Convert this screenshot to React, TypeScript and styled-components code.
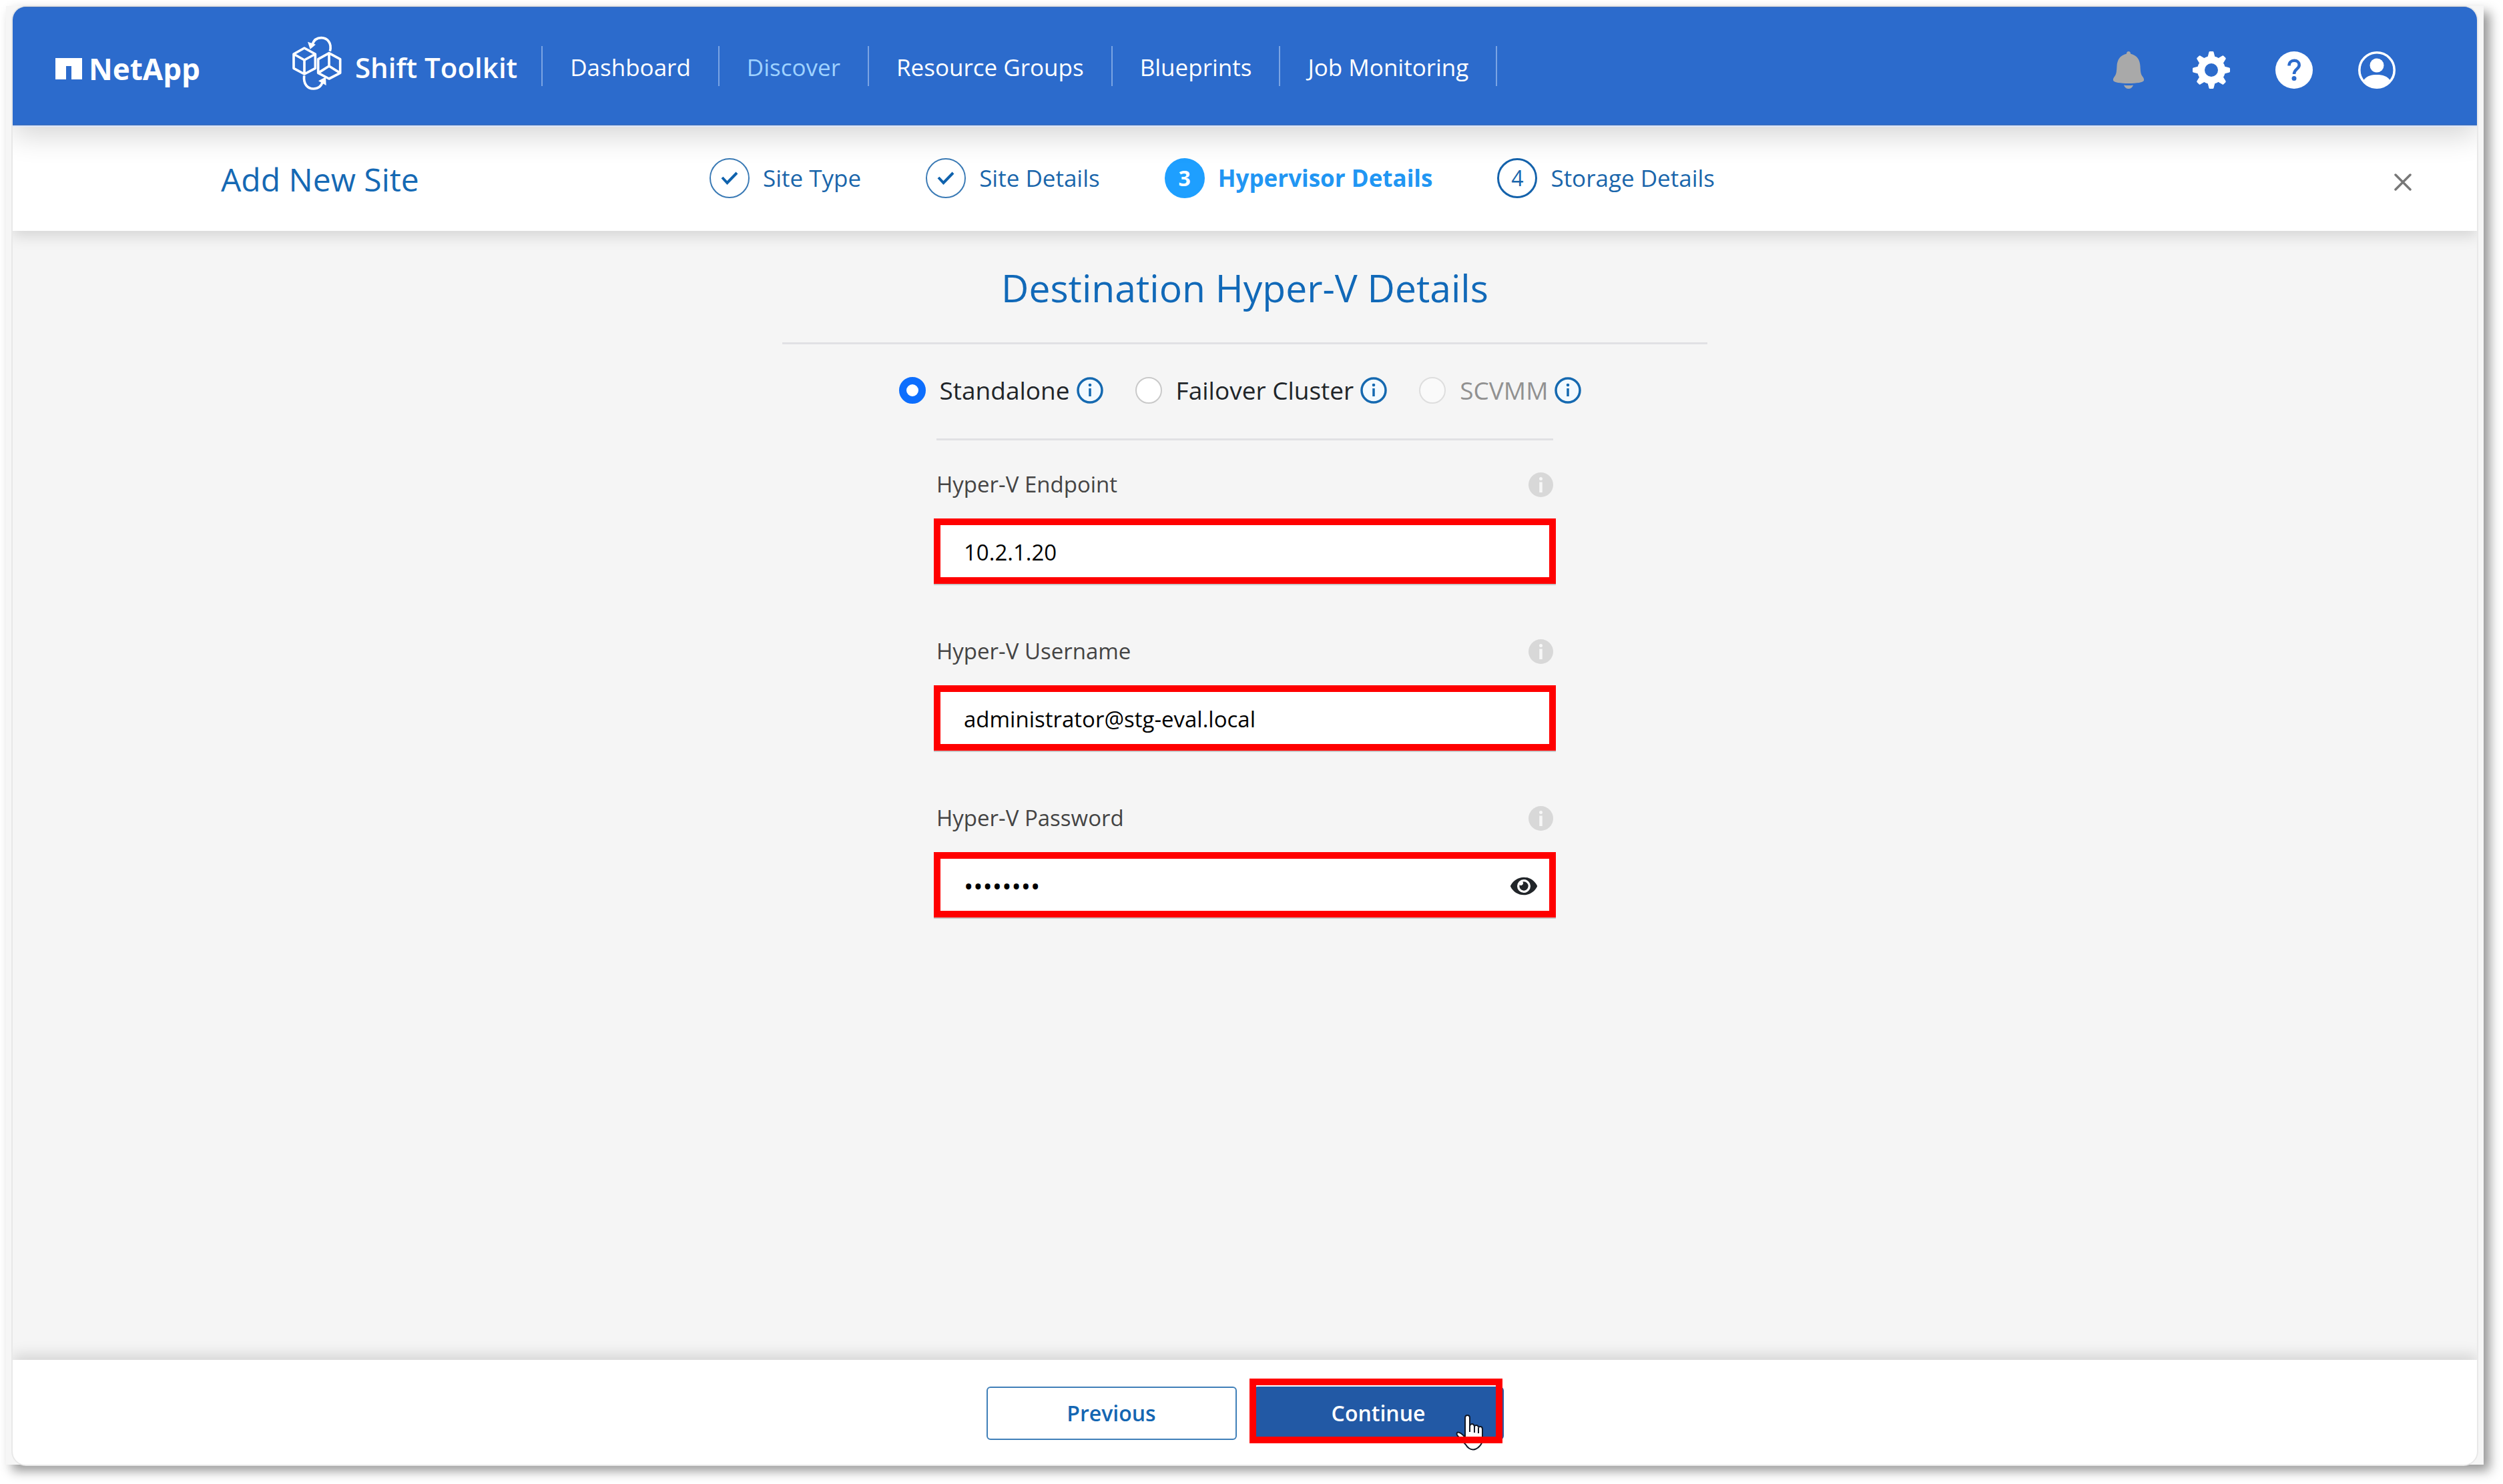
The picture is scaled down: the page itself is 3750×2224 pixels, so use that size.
import React, { useState } from "react";
import styled, { createGlobalStyle, css } from "styled-components";
import { FaEye } from "react-icons/fa";

const GlobalStyle = createGlobalStyle`
  *, *::before, *::after { box-sizing: border-box; }
  body { margin: 0; background: #fff; font-family: "Open Sans", "Noto Sans", sans-serif; }
  button, input { font-family: inherit; }
`;

const Page = styled.div`
  min-height: 100vh;
  display: flex;
  padding: 9px 29px 29px 9px;
`;

const Frame = styled.div`
  flex: 1;
  display: flex;
  padding: 1px 10px 0;
  background: #f6f6f6;
  box-shadow: 9px 9px 16px rgba(0, 0, 0, 0.42);
`;

const Window = styled.div`
  flex: 1;
  display: flex;
  flex-direction: column;
  overflow: hidden;
  border-radius: 20px;
  background: #f5f5f5;
  box-shadow: 0 0 0 2px #e8e8e8;
`;

const Header = styled.header`
  position: relative;
  z-index: 2;
  display: flex;
  align-items: center;
  min-height: 178px;
  padding: 0 122px 0 64px;
  background: #2c6bcc;
  border-top: 1px solid #4470b4;
  border-bottom: 1px solid #4470b4;
  box-shadow: 0 2px 0 #dce7fb, 0 16px 40px rgba(0, 0, 0, 0.16);
  color: #fff;
`;

const Brand = styled.a`
  display: flex;
  align-items: center;
  gap: 10px;
  padding-top: 8px;
  color: inherit;
  text-decoration: none;
  font-size: 44px;
  line-height: 60px;
  font-weight: 700;
`;

const Product = styled.div`
  display: flex;
  align-items: center;
  gap: 20px;
  margin: 0 36px 0 137px;
  padding-top: 4px;
  font-size: 42px;
  line-height: 60px;
  font-weight: 600;
`;

const ProductMark = styled.svg`
  width: 75px;
  height: 82px;
  margin-bottom: 12px;
`;

const Nav = styled.nav`
  display: flex;
  border-left: 2px solid #7ba4e3;
`;

const NavLink = styled.a<{ $active?: boolean }>`
  padding: 4px 41px 0;
  border-right: 2px solid #7ba4e3;
  color: ${(p) => (p.$active ? "#9fd2ff" : "#fff")};
  font-size: 35px;
  line-height: 56px;
  text-decoration: none;
  white-space: nowrap;
`;

const Actions = styled.div`
  display: flex;
  gap: 68px;
  margin-left: auto;
  padding-top: 12px;
`;

const IconButton = styled.button`
  display: flex;
  padding: 0;
  border: 0;
  background: none;
  cursor: pointer;
`;

const ActionIcon = styled.svg`
  width: 56px;
  height: 56px;
`;

const StepBar = styled.div`
  position: relative;
  z-index: 1;
  display: grid;
  grid-template-columns: 1fr auto 1fr;
  align-items: center;
  min-height: 158px;
  padding-right: 98px;
  background: #fff;
  box-shadow: 0 8px 20px rgba(0, 0, 0, 0.13);
`;

const WizardTitle = styled.h1`
  margin: 0;
  padding: 4px 0 0 312px;
  color: #1569b4;
  font-size: 48px;
  line-height: 64px;
  font-weight: 400;
`;

const Steps = styled.ol`
  display: flex;
  gap: 97px;
  margin: 0;
  padding: 0;
  list-style: none;
`;

const Step = styled.li<{ $current?: boolean }>`
  display: flex;
  align-items: center;
  gap: 20px;
  color: ${(p) => (p.$current ? "#2196f3" : "#1a66ab")};
  font-size: 35px;
  line-height: 60px;
  font-weight: ${(p) => (p.$current ? 700 : 400)};
  white-space: nowrap;
`;

type StepState = "done" | "current" | "next";

const StepBadge = styled.span<{ $state: StepState }>`
  display: flex;
  align-items: center;
  justify-content: center;
  width: 60px;
  height: 60px;
  border: ${(p) => (p.$state === "done" ? "2px solid #3a7ab5" : "3px solid #1462ab")};
  border-radius: 50%;
  font-size: 32px;
  line-height: 54px;
  ${(p) =>
    p.$state === "current" &&
    css`
      border-color: #1e9fff;
      background: #1e9fff;
      color: #fff;
    `}
`;

const CloseButton = styled(IconButton)`
  justify-self: end;
  padding-top: 12px;
`;

const Main = styled.main`
  flex: 1;
  display: flex;
  flex-direction: column;
  align-items: center;
  padding: 47px 24px;
`;

const Title = styled.h2`
  margin: 0;
  color: #1169b8;
  font-size: 57px;
  line-height: 76px;
  font-weight: 400;
`;

const Rule = styled.hr<{ $wide?: boolean }>`
  width: 100%;
  max-width: ${(p) => (p.$wide ? 1386 : 924)}px;
  height: 3px;
  margin: 44px 0 41px;
  border: 0;
  background: #e1e1e4;
`;

const RadioRow = styled.div`
  display: flex;
  gap: 48px;
  padding-right: 14px;
`;

const RadioOption = styled.div<{ $disabled?: boolean }>`
  display: flex;
  align-items: center;
  gap: 10px;
  color: ${(p) => (p.$disabled ? "#919191" : "#212529")};
`;

const RadioLabel = styled.label`
  display: flex;
  align-items: center;
  gap: 21px;
  font-size: 37px;
  line-height: 56px;
  white-space: nowrap;
`;

const Radio = styled.input`
  appearance: none;
  width: 40px;
  height: 40px;
  margin: 0;
  border: 2px solid #c9c9c9;
  border-radius: 50%;
  background: #fff;
  &:checked { border: 11px solid #0d6efd; }
  &:disabled { opacity: 0.5; }
`;

const Fields = styled.div`
  display: grid;
  gap: 76px;
  width: 100%;
  max-width: 924px;
`;

const Field = styled.div`
  display: flex;
  flex-direction: column;
  gap: 26px;
`;

const FieldHead = styled.div`
  display: flex;
  align-items: center;
  justify-content: space-between;
  height: 50px;
`;

const FieldLabel = styled.label`
  color: #444;
  font-size: 33px;
  line-height: 48px;
`;

const InputBox = styled.div`
  display: flex;
  align-items: center;
  height: 98px;
  margin: 0 -4px;
  padding: 4px 18px 0 35px;
  border: 10px solid #f00;
  background: #fff;
  box-shadow: 0 2px 0 #c9c9c9;
`;

const TextInput = styled.input`
  flex: 1;
  min-width: 0;
  padding: 0;
  border: 0;
  outline: 0;
  background: none;
  color: #000;
  font-size: ${(p) => (p.type === "password" ? 38 : 33)}px;
  line-height: 48px;
`;

const Footer = styled.footer`
  position: relative;
  z-index: 1;
  display: flex;
  justify-content: center;
  gap: 25px;
  padding: 40px 24px 37px;
  background: #fff;
  box-shadow: 0 -8px 20px rgba(0, 0, 0, 0.13);
`;

const ActionButton = styled.button<{ $primary?: boolean }>`
  width: 375px;
  height: 80px;
  padding: 0;
  border: 2px solid ${(p) => (p.$primary ? "#2259a5" : "#3f7fb8")};
  border-radius: 6px;
  background: ${(p) => (p.$primary ? "#2259a5" : "#fff")};
  color: ${(p) => (p.$primary ? "#fff" : "#1466b2")};
  font-size: 32px;
  line-height: 48px;
  font-weight: 600;
`;

const Marked = styled.div`
  position: relative;
  display: flex;
  &::after {
    content: "";
    position: absolute;
    inset: -12px 2px -5px -6px;
    border: 10px solid #f00;
    pointer-events: none;
  }
`;

const Pointer = styled.svg`
  position: absolute;
  right: 30px;
  top: 42px;
  width: 42px;
  height: 54px;
  pointer-events: none;
`;

const NetAppMark = () => (
  <svg width="40" height="32" viewBox="0 0 40 32" aria-hidden="true">
    <path d="M0 0H40V32H24V12H16V32H0Z" fill="#fff" />
  </svg>
);

const ShiftMark = () => (
  <ProductMark viewBox="50 44 225 246" fill="none" stroke="#fff" strokeWidth="11" strokeLinejoin="round" aria-hidden="true">
    <path d="M107 98L156 125V189L107 215L59 189V125ZM59 125L107 152L156 125M107 152V215" />
    <path d="M218 121L268 148V210L218 236L169 210V148ZM169 210L218 179L268 210M218 179V121" />
    <path d="M222 112C232 75 210 52 183 52C163 52 149 63 143 82" />
    <path d="M106 222C102 262 122 281 148 281C170 281 184 267 190 248" />
    <path d="M122 70L158 82L133 103Z" fill="#fff" stroke="none" />
    <path d="M203 228L170 246L205 266Z" fill="#fff" stroke="none" />
  </ProductMark>
);

const BellIcon = () => (
  <ActionIcon viewBox="0 0 56 56" fill="#a9a9a9" aria-hidden="true">
    <path d="M28 0c2 0 3 1.500 3 3.500C41 6 45 13 45.500 22c.4 8 .8 12 3 15 2 2.500 3 4.500 2.500 6.500-.6 3-11 4.500-23 4.500S5.600 46.500 5 43.500c-.5-2 .5-4 2.500-6.500 2.200-3 2.600-7 3-15C11 13 15 6 25 3.500 25 1.500 26 0 28 0z" />
    <path d="M21 50.500c4 .7 10 .7 14 0-1 3.500-3.500 5.500-7 5.500s-6-2-7-5.500z" />
  </ActionIcon>
);

const GearIcon = () => (
  <ActionIcon viewBox="0 0 56 56" aria-hidden="true">
    <circle cx="28" cy="28" r="15.500" fill="none" stroke="#fff" strokeWidth="11" />
    {[0, 45, 90, 135, 180, 225, 270, 315].map((a) => (
      <path key={a} transform={`rotate(${a} 28 28)`} d="M22 10.500L24.500 1Q24.700 0 26 0H30Q31.300 0 31.500 1L34 10.500Z" fill="#fff" />
    ))}
  </ActionIcon>
);

const HelpIcon = () => (
  <ActionIcon viewBox="0 0 56 56" aria-hidden="true">
    <circle cx="28" cy="28" r="28" fill="#fff" />
    <path d="M20.500 21.500c0-5 3.200-7.700 7.700-7.700s7.500 2.700 7.500 6.700c0 6-7.700 6-7.700 13.500" fill="none" stroke="#2c6bcc" strokeWidth="4.500" />
    <circle cx="28" cy="40.500" r="3.500" fill="#2c6bcc" />
  </ActionIcon>
);

const UserIcon = () => (
  <ActionIcon viewBox="0 0 56 56" fill="#fff" aria-hidden="true">
    <circle cx="28" cy="28" r="26.200" fill="none" stroke="#fff" strokeWidth="3.600" />
    <circle cx="28" cy="21" r="10.500" />
    <path d="M8.500 43C12 37.500 19 35 28 35s16 2.500 19.500 8A25.500 25.500 0 0 1 28 54 25.500 25.500 0 0 1 8.500 43z" />
  </ActionIcon>
);

const CheckIcon = () => (
  <svg width="26" height="22" viewBox="0 0 26 22" fill="none" stroke="#0f62ad" strokeWidth="4" aria-hidden="true">
    <path d="M2 10L9.500 18L24 3" />
  </svg>
);

const CloseIcon = () => (
  <svg width="26" height="26" viewBox="0 0 26 26" stroke="#777" strokeWidth="3.500" strokeLinecap="round" aria-hidden="true">
    <path d="M2 2L24 24M24 2L2 24" />
  </svg>
);

const OutlineInfo = () => (
  <svg width="40" height="40" viewBox="0 0 40 40" aria-hidden="true">
    <circle cx="20" cy="20" r="18" fill="#f3faff" stroke="#1569b0" strokeWidth="3.500" />
    <circle cx="20" cy="12" r="2.300" fill="#1569b0" />
    <path d="M20 17V29" stroke="#1569b0" strokeWidth="3.500" />
  </svg>
);

const SolidInfo = () => (
  <svg width="37" height="37" viewBox="0 0 37 37" aria-hidden="true">
    <circle cx="18.500" cy="18.500" r="18.500" fill="#d8d8d8" />
    <circle cx="18.500" cy="9.500" r="2.500" fill="#f7f7f7" />
    <path d="M18.500 14.500V30" stroke="#f7f7f7" strokeWidth="4.500" />
  </svg>
);

const HandPointer = () => (
  <Pointer viewBox="0 0 42 54" aria-hidden="true">
    <path
      d="M14 28V5Q14 1 17.500 1T21 5V17Q22 14 24.500 14T28 17.500Q29 15.500 31.500 16T34 19.500Q35 17.500 37.500 18T40 22V36Q40 43 36 47Q31 52.500 26 52.500Q19 52 15 45L3 32Q0 28 3 26.500Q7 26 14 34Z"
      fill="#fff"
      stroke="#111827"
      strokeWidth="2"
    />
    <path d="M21 16V26M28 18V27M34 20V28" stroke="#111827" strokeWidth="2" />
  </Pointer>
);

const navItems = ["Dashboard", "Discover", "Resource Groups", "Blueprints", "Job Monitoring"];

const steps: { label: string; state: StepState }[] = [
  { label: "Site Type", state: "done" },
  { label: "Site Details", state: "done" },
  { label: "Hypervisor Details", state: "current" },
  { label: "Storage Details", state: "next" },
];

const modes = [
  { id: "standalone", label: "Standalone" },
  { id: "failover", label: "Failover Cluster" },
  { id: "scvmm", label: "SCVMM", disabled: true },
];

const fields = [
  { id: "endpoint", label: "Hyper-V Endpoint", value: "10.2.1.20" },
  { id: "username", label: "Hyper-V Username", value: "administrator@stg-eval.local" },
  { id: "password", label: "Hyper-V Password", value: "password", secret: true },
];

export default function App() {
  const [mode, setMode] = useState("standalone");
  const [revealed, setRevealed] = useState(false);

  return (
    <Page>
      <GlobalStyle />
      <Frame>
        <Window>
          <Header>
            <Brand href="#home">
              <NetAppMark />
              NetApp
            </Brand>
            <Product>
              <ShiftMark />
              Shift Toolkit
            </Product>
            <Nav>
              {navItems.map((item) => (
                <NavLink key={item} href="#" $active={item === "Discover"}>
                  {item}
                </NavLink>
              ))}
            </Nav>
            <Actions>
              <IconButton aria-label="Notifications"><BellIcon /></IconButton>
              <IconButton aria-label="Settings"><GearIcon /></IconButton>
              <IconButton aria-label="Help"><HelpIcon /></IconButton>
              <IconButton aria-label="Account"><UserIcon /></IconButton>
            </Actions>
          </Header>

          <StepBar>
            <WizardTitle>Add New Site</WizardTitle>
            <Steps>
              {steps.map((s, i) => (
                <Step key={s.label} $current={s.state === "current"}>
                  <StepBadge $state={s.state}>{s.state === "done" ? <CheckIcon /> : i + 1}</StepBadge>
                  {s.label}
                </Step>
              ))}
            </Steps>
            <CloseButton aria-label="Close"><CloseIcon /></CloseButton>
          </StepBar>

          <Main>
            <Title>Destination Hyper-V Details</Title>
            <Rule $wide />
            <RadioRow role="radiogroup" aria-label="Deployment">
              {modes.map((m) => (
                <RadioOption key={m.id} $disabled={m.disabled}>
                  <RadioLabel htmlFor={m.id}>
                    <Radio
                      type="radio"
                      id={m.id}
                      name="mode"
                      checked={mode === m.id}
                      disabled={m.disabled}
                      onChange={() => setMode(m.id)}
                    />
                    {m.label}
                  </RadioLabel>
                  <OutlineInfo />
                </RadioOption>
              ))}
            </RadioRow>
            <Rule />
            <Fields>
              {fields.map((f) => (
                <Field key={f.id}>
                  <FieldHead>
                    <FieldLabel htmlFor={f.id}>{f.label}</FieldLabel>
                    <SolidInfo />
                  </FieldHead>
                  <InputBox>
                    <TextInput id={f.id} type={f.secret && !revealed ? "password" : "text"} defaultValue={f.value} />
                    {f.secret && (
                      <IconButton aria-label="Show password" onClick={() => setRevealed(!revealed)}>
                        <FaEye size={40} color="#212529" />
                      </IconButton>
                    )}
                  </InputBox>
                </Field>
              ))}
            </Fields>
          </Main>

          <Footer>
            <ActionButton>Previous</ActionButton>
            <Marked>
              <ActionButton $primary>Continue</ActionButton>
              <HandPointer />
            </Marked>
          </Footer>
        </Window>
      </Frame>
    </Page>
  );
}
